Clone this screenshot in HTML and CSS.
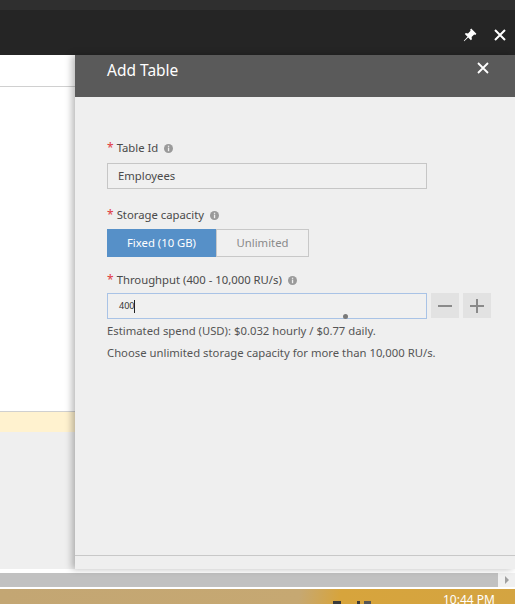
FILE: index.html
```html
<!DOCTYPE html>
<html>
<head>
<meta charset="utf-8">
<link rel="stylesheet" href="styles.css">
</head>
<body>
<div class="screen">
  <div class="top-strip"></div>
  <div class="title-bar">
    <svg class="pin" width="14" height="14" viewBox="0 0 14 14">
      <path d="M8.2 0.6 L13.4 5.8 L12.3 6.9 L11.2 6.4 L8.6 9.0 L8.9 11.2 L7.9 12.2 L5.2 9.5 L1.2 13.2 L0.8 12.8 L4.5 8.8 L1.8 6.1 L2.8 5.1 L5.0 5.4 L7.6 2.8 L7.1 1.7 Z" fill="#fff"/>
    </svg>
    <svg class="close-top" width="12" height="12" viewBox="0 0 12 12">
      <path d="M1 1 L11 11 M11 1 L1 11" stroke="#fff" stroke-width="2"/>
    </svg>
  </div>
  <div class="main">
    <div class="left-pane">
      <div class="left-white">
        <div class="left-line"></div>
      </div>
      <div class="left-yellow"></div>
      <div class="left-gray"></div>
    </div>
    <div class="panel">
      <div class="panel-header">
        <span class="panel-title">Add Table</span>
        <svg class="close-panel" width="12" height="12" viewBox="0 0 12 12">
          <path d="M1 1 L11 11 M11 1 L1 11" stroke="#fff" stroke-width="1.8"/>
        </svg>
      </div>
      <div class="panel-body">
        <div class="form">
          <div class="label lbl-first"><span class="req">*</span> Table Id <svg class="info" width="9" height="9" viewBox="0 0 9 9"><circle cx="4.5" cy="4.5" r="4.5" fill="#9a9a9a"/><rect x="3.9" y="3.6" width="1.3" height="3.6" fill="#f0f0f0"/><rect x="3.9" y="1.7" width="1.3" height="1.2" fill="#f0f0f0"/></svg></div>
          <div class="text-input">Employees</div>
          <div class="label lbl-gap"><span class="req">*</span> Storage capacity <svg class="info" width="9" height="9" viewBox="0 0 9 9"><circle cx="4.5" cy="4.5" r="4.5" fill="#9a9a9a"/><rect x="3.9" y="3.6" width="1.3" height="3.6" fill="#f0f0f0"/><rect x="3.9" y="1.7" width="1.3" height="1.2" fill="#f0f0f0"/></svg></div>
          <div class="toggle">
            <div class="tog tog-on">Fixed (10 GB)</div>
            <div class="tog tog-off">Unlimited</div>
          </div>
          <div class="label lbl-gap2"><span class="req">*</span> Throughput (400 - 10,000 RU/s) <svg class="info" width="9" height="9" viewBox="0 0 9 9"><circle cx="4.5" cy="4.5" r="4.5" fill="#9a9a9a"/><rect x="3.9" y="3.6" width="1.3" height="3.6" fill="#f0f0f0"/><rect x="3.9" y="1.7" width="1.3" height="1.2" fill="#f0f0f0"/></svg></div>
          <div class="through-row">
            <div class="text-input focused"><span class="small-val">400</span><span class="caret"></span><span class="cursor-dot"></span></div>
            <div class="step-btn">
              <svg width="16" height="16" viewBox="0 0 16 16"><path d="M1 8 H15" stroke="#8a8a8a" stroke-width="2"/></svg>
            </div>
            <div class="step-btn">
              <svg width="16" height="16" viewBox="0 0 16 16"><path d="M1 8 H15 M8 1 V15" stroke="#8a8a8a" stroke-width="2"/></svg>
            </div>
          </div>
          <div class="note">Estimated spend (USD): $0.032 hourly / $0.77 daily.</div>
          <div class="note">Choose unlimited storage capacity for more than 10,000 RU/s.</div>
        </div>
        <div class="panel-footer"></div>
      </div>
    </div>
  </div>
  <div class="white-gap"></div>
  <div class="scrollbar">
    <div class="scroll-thumb"></div>
    <div class="scroll-arrow"><svg width="6" height="8" viewBox="0 0 6 8"><path d="M1 0 L5 4 L1 8 Z" fill="#a0a0a0"/></svg></div>
  </div>
  <div class="white-gap2"></div>
  <div class="taskbar">
    <span class="tb-icon tb-i1"></span>
    <span class="tb-icon tb-i2"></span>
    <span class="tb-icon tb-i3"></span>
    <span class="clock">10:44 PM</span>
  </div>
</div>
</body>
</html>
```

FILE: styles.css
```css
html, body {
  margin: 0;
  padding: 0;
}
body {
  width: 515px;
  height: 604px;
  overflow: hidden;
  font-family: "Segoe UI", "Noto Sans", "Open Sans", sans-serif;
  background: #efefef;
}
.screen {
  display: flex;
  flex-direction: column;
  width: 515px;
  height: 604px;
}
.top-strip {
  height: 10px;
  background: #2f2f2f;
}
.title-bar {
  height: 45px;
  background: #252525;
  display: flex;
  align-items: flex-start;
  justify-content: flex-end;
  padding-top: 13px;
  padding-right: 9px;
  box-sizing: border-box;
  gap: 17px;
}
.title-bar .pin {
  margin-top: 5px;
}
.title-bar .close-top {
  margin-top: 6px;
}
.main {
  height: 514px;
  display: flex;
}
.left-pane {
  width: 75px;
  display: flex;
  flex-direction: column;
  flex-shrink: 0;
}
.left-white {
  height: 356px;
  background: #fff;
  padding-top: 31px;
  box-sizing: border-box;
}
.left-line {
  height: 1px;
  background: #d0d0d0;
}
.left-yellow {
  height: 20px;
  background: #fff2cf;
  border-top: 1px solid #d0d0d0;
}
.left-gray {
  flex: 1;
  background: #efefef;
}
.panel {
  flex: 1;
  display: flex;
  flex-direction: column;
  position: relative;
  box-shadow: -3px 0 7px rgba(0, 0, 0, 0.28);
}
.panel-header {
  height: 42px;
  background: #5a5a5a;
  display: flex;
  align-items: flex-start;
  justify-content: space-between;
  padding: 0 26px 0 32px;
}
.panel-title {
  color: #fff;
  font-size: 15.5px;
  line-height: 30px;
}
.close-panel {
  margin-top: 7px;
}
.panel-body {
  flex: 1;
  background: #efefef;
  display: flex;
  flex-direction: column;
  justify-content: space-between;
}
.form {
  padding: 43px 0 0 32px;
}
.label {
  font-size: 11.3px;
  line-height: 16px;
  color: #4a4a4a;
  display: flex;
  align-items: center;
  gap: 3px;
}
.label .req {
  color: #e0393e;
  font-size: 12px;
}
.label .info {
  margin-left: 3px;
  margin-top: 1px;
}
.lbl-gap {
  margin-top: 18px;
}
.lbl-gap2 {
  margin-top: 15px;
}
.text-input {
  margin-top: 7px;
  width: 320px;
  height: 26px;
  box-sizing: border-box;
  border: 1px solid #c6c6c6;
  padding: 0 10px;
  font-size: 11.3px;
  line-height: 24px;
  color: #4a4a4a;
  background: #f0f0f0;
}
.toggle {
  margin-top: 6px;
  display: flex;
  height: 28px;
}
.tog {
  font-size: 11.3px;
  line-height: 26px;
  text-align: center;
  box-sizing: border-box;
}
.tog-on {
  width: 109px;
  background: #5690c8;
  color: #fff;
  border: 1px solid #5690c8;
}
.tog-off {
  width: 93px;
  border: 1px solid #c8c8c8;
  color: #8a8a8a;
  background: #f0f0f0;
}
.through-row {
  margin-top: 5px;
  display: flex;
  gap: 4px;
}
.through-row .text-input {
  margin-top: 0;
  position: relative;
  border-color: #a9c3e6;
  display: flex;
  align-items: center;
}
.small-val {
  font-size: 9px;
  color: #333;
  margin-left: 1px;
}
.caret {
  width: 1px;
  height: 13px;
  background: #222;
}
.cursor-dot {
  position: absolute;
  left: 235px;
  top: 20px;
  width: 5px;
  height: 5px;
  border-radius: 50%;
  background: #7a7a7a;
}
.step-btn {
  width: 28px;
  height: 25px;
  background: #e2e2e2;
  display: flex;
  align-items: center;
  justify-content: center;
}
.note {
  font-size: 11.3px;
  line-height: 22px;
  color: #555;
}
.through-row + .note {
  margin-top: 1px;
}
.panel-footer {
  height: 13px;
  border-top: 1px solid #c8c8c8;
}
.white-gap {
  height: 4px;
  background: #fff;
}
.scrollbar {
  height: 14px;
  display: flex;
  background: #f0f0f0;
}
.scroll-thumb {
  width: 498px;
  background: #c1c1c1;
}
.scroll-arrow {
  flex: 1;
  display: flex;
  align-items: center;
  justify-content: center;
}
.white-gap2 {
  height: 2px;
  background: #fff;
}
.taskbar {
  flex: 1;
  position: relative;
  overflow: hidden;
  background: linear-gradient(100deg, #c3a673 0%, #c6a872 58%, #d7a43c 66%, #d4a441 100%);
}
.clock {
  position: absolute;
  left: 443px;
  top: 4px;
  color: #fff;
  font-size: 12px;
  line-height: 14px;
  font-family: "Segoe UI", "Noto Sans", sans-serif;
}
.tb-icon {
  position: absolute;
  top: 12px;
  height: 4px;
  background: #3a3a3a;
}
.tb-i1 { left: 333px; width: 8px; }
.tb-i2 { left: 357px; width: 3px; }
.tb-i3 { left: 364px; width: 7px; background: #555; }
```
